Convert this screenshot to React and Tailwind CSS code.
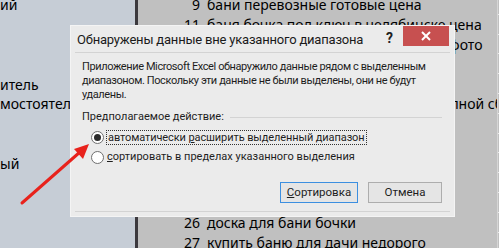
import React from 'react';

const leftRows = ['ий', '', '', '', 'итель', 'мостоятель', '', '', 'ый', '', '', '', ''];

const rightRows = [
  ['9', 'бани перевозные готовые цена'],
  ['11', 'баня бочка под ключ в челябинске цена'],
  ['12', 'баня бочка из липы под ключ цена фото'],
  ['', ''],
  ['', ''],
  ['17', 'баня бочка под ключ с отделкою полной сборкой'],
  ['', ''],
  ['', ''],
  ['', ''],
  ['', ''],
  ['', ''],
  ['26', 'доска для бани бочки'],
  ['27', 'купить баню для дачи недорого'],
];

function Radio({ checked }) {
  return (
    <span className="w-[13px] h-[13px] rounded-full border border-[#6f6f6f] bg-white flex items-center justify-center shrink-0">
      {checked && <span className="w-[7px] h-[7px] rounded-full bg-[#2b2b2b]" />}
    </span>
  );
}

export default function App() {
  const sheetFont = { fontFamily: '"Noto Sans", sans-serif' };
  const uiFont = { fontFamily: 'Roboto, "Noto Sans", sans-serif' };
  return (
    <div className="relative w-[499px] h-[248px] overflow-hidden flex text-black" style={sheetFont}>
      {/* left sheet */}
      <div className="w-[135px] bg-[#c6cdd6] flex flex-col -mt-[5px] overflow-hidden">
        {leftRows.map((t, i) => (
          <div key={i} className="h-[19.8px] shrink-0 flex items-center text-[14px] whitespace-nowrap">{t}</div>
        ))}
      </div>
      <div className="w-[3px] bg-[#3c393e]" />

      {/* right sheet */}
      <div className="flex-1 bg-[#c0c0c0] flex overflow-hidden">
        <div className="flex-1 flex flex-col -mt-[5px] overflow-hidden">
          {rightRows.map(([n, t], i) => (
            <div key={i} className="h-[19.8px] shrink-0 flex items-center text-[14px] whitespace-nowrap">
              <span className="w-[62px] text-right shrink-0">{n}</span>
              <span className="ml-[7px]">{t}</span>
            </div>
          ))}
        </div>
        <div className="w-[2px] border-l border-[#d6d6d6] flex flex-col -mt-[5px]">
          {rightRows.map((_, i) => (
            <div key={i} className="h-[19.8px] shrink-0 border-b border-[#ececec]" />
          ))}
        </div>
      </div>

      {/* dialog */}
      <div className="absolute left-[70px] top-[25px] w-[385px] h-[192px] bg-[#ebebeb] border border-[#f4f4f4] flex flex-col" style={uiFont}>
        <div className="h-[26px] flex items-start">
          <div className="flex-1 pl-[6px] pt-[5px] text-[13px] tracking-[-0.2px] leading-[17px] text-[#1a1a1a] whitespace-nowrap">Обнаружены данные вне указанного диапазона</div>
          <div className="w-[17px] pt-[2px] text-[14px] font-bold text-[#222]">?</div>
          <div className="w-[46px] h-[20px] mr-[5px] bg-[#c75050] flex items-center justify-center">
            <svg width="10" height="10" viewBox="0 0 10 10" stroke="white" strokeWidth="2">
              <line x1="1" y1="1" x2="9" y2="9" />
              <line x1="9" y1="1" x2="1" y2="9" />
            </svg>
          </div>
        </div>
        <div className="mx-[4px] h-px bg-[#d3d3d3]" />

        <div className="pl-[11px] pr-[4px] pt-[7px] text-[11px] tracking-[-0.4px] leading-[14px] text-[#1e1e1e] whitespace-nowrap">
          Приложение Microsoft Excel обнаружило данные рядом с выделенным<br />
          диапазоном. Поскольку эти данные не были выделены, они не будут<br />
          удалены.
        </div>

        <div className="pl-[11px] pr-[12px] mt-[8px] h-[14px] flex items-center gap-[6px] text-[11px] text-[#1e1e1e]">
          <span className="whitespace-nowrap">Предполагаемое действие:</span>
          <span className="flex-1 h-px bg-[#d3d3d3]" />
        </div>

        <div className="pl-[20px] mt-[5px] flex flex-col gap-[4px] text-[11px] text-[#1e1e1e]">
          <div className="flex items-center gap-[2px] h-[16px]">
            <Radio checked />
            <span className="border border-dotted border-[#333] px-px leading-[13px] whitespace-nowrap tracking-[-0.1px]">
              автоматически <u>р</u>асширить выделенный диапазон
            </span>
          </div>
          <div className="flex items-center gap-[3px] h-[16px]">
            <Radio />
            <span className="whitespace-nowrap"><u>с</u>ортировать в пределах указанного выделения</span>
          </div>
        </div>

        <div className="flex justify-end gap-[10px] pr-[12px] mt-[17px] text-[11.5px] text-[#1e1e1e]">
          <button className="w-[78px] h-[21px] border border-[#3c8fe0] bg-[#e5e5e5] flex items-center justify-center">
            <span><u>С</u>ортировка</span>
          </button>
          <button className="w-[74px] h-[21px] border border-[#adadad] bg-[#e5e5e5] flex items-center justify-center">
            <span>Отмена</span>
          </button>
        </div>
        <div className="flex-1" />
        <div className="mx-[4px] mb-[4px] h-px bg-[#d3d3d3]" />
      </div>

      {/* red arrow */}
      <svg className="absolute left-0 top-0" width="499" height="248" viewBox="0 0 499 248">
        <line x1="22" y1="203" x2="80" y2="152" stroke="#e8221c" strokeWidth="3" strokeLinecap="round" />
        <polygon points="89,144 74,149 83,159" fill="#e8221c" />
      </svg>
    </div>
  );
}
